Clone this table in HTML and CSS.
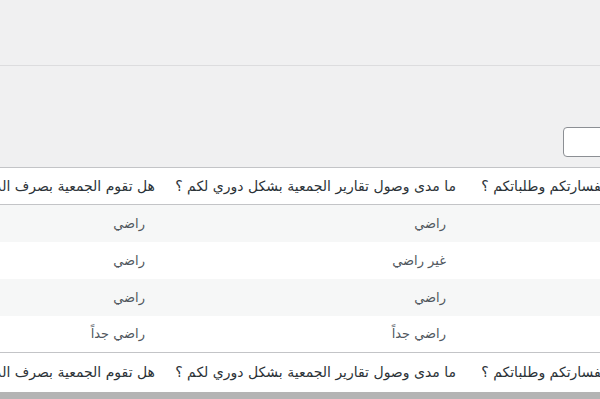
FILE: index.html
```html
<!DOCTYPE html>
<html lang="ar">
<head>
<meta charset="utf-8">
<link rel="stylesheet" href="styles.css">
</head>
<body>
<div class="page">
  <header class="topbar"></header>
  <div class="toolbar">
    <input class="search" type="text">
  </div>
  <div class="table-wrap">
    <table class="survey" dir="rtl">
      <colgroup>
        <col class="c1"><col class="c2"><col class="c3">
      </colgroup>
      <thead>
        <tr>
          <th>هل يتم الرد على استفسارتكم وطلباتكم ؟</th>
          <th>ما مدى وصول تقارير الجمعية بشكل دوري لكم ؟</th>
          <th>هل تقوم الجمعية بصرف الدعم في الوقت المناسب ؟</th>
        </tr>
      </thead>
      <tbody>
        <tr class="alt"><td></td><td>راضي</td><td>راضي</td></tr>
        <tr><td></td><td>غير راضي</td><td>راضي</td></tr>
        <tr class="alt"><td></td><td>راضي</td><td>راضي</td></tr>
        <tr><td></td><td>راضي جداً</td><td>راضي جداً</td></tr>
      </tbody>
      <tfoot>
        <tr>
          <th>هل يتم الرد على استفسارتكم وطلباتكم ؟</th>
          <th>ما مدى وصول تقارير الجمعية بشكل دوري لكم ؟</th>
          <th>هل تقوم الجمعية بصرف الدعم في الوقت المناسب ؟</th>
        </tr>
      </tfoot>
    </table>
  </div>
  <div class="scrollbar"></div>
</div>
</body>
</html>
```
FILE: styles.css
```css
* { box-sizing: border-box; }
html, body {
  margin: 0;
  padding: 0;
  background: #f0f0f1;
  overflow: hidden;
  font-family: "DejaVu Sans", "Noto Sans", sans-serif;
}
.page {
  width: 600px;
  height: 399px;
  overflow: hidden;
  display: flex;
  flex-direction: column;
}
.topbar {
  height: 66px;
  border-bottom: 1px solid #dcdcde;
  flex: none;
}
.toolbar {
  height: 101px;
  display: flex;
  justify-content: flex-end;
  align-items: flex-end;
  padding-bottom: 10px;
  flex: none;
}
.search {
  width: 100px;
  height: 30px;
  margin: 0 -63px 0 0;
  border: 1px solid #8c8f94;
  border-radius: 4px;
  background: #fff;
}
.table-wrap {
  overflow: hidden;
  flex: none;
}
.survey {
  direction: rtl;
  table-layout: fixed;
  width: 867px;
  margin-left: -136px;
  border-collapse: collapse;
  background: #fff;
  border-top: 1px solid #c3c4c7;
}
.c1 { width: 265px; }
.c2 { width: 301px; }
.c3 { width: 301px; }
.survey th {
  text-align: right;
  font-weight: normal;
  font-size: 14px;
  color: #2c3338;
  white-space: nowrap;
  overflow: hidden;
  padding: 0 10px;
  height: 37px;
}
.survey thead th { border-bottom: 1px solid #c3c4c7; }
.survey tfoot th { border-top: 1px solid #c3c4c7; height: 39px; }
.survey td {
  text-align: right;
  font-size: 13px;
  color: #50575e;
  padding: 0 20px 0 10px;
  height: 37px;
  white-space: nowrap;
}
.survey tr.alt td { background: #f6f7f7; }
.scrollbar {
  height: 12px;
  background: #b4b4b4;
  flex: none;
}
```
